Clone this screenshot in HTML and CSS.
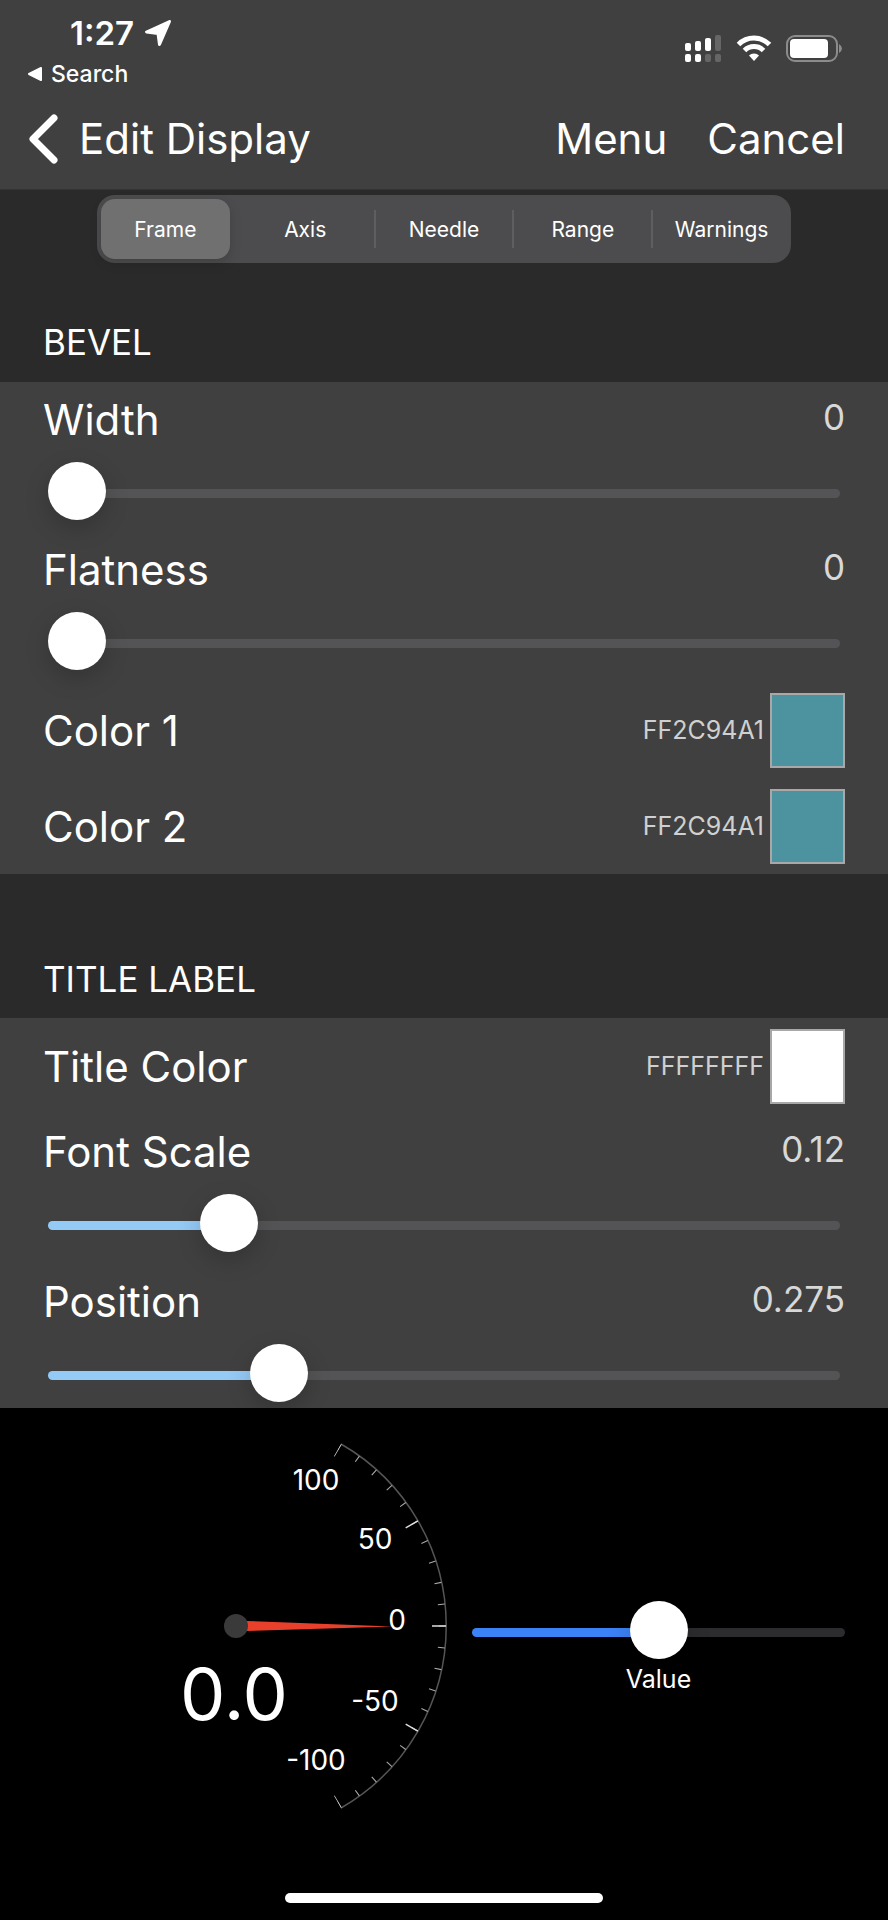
FILE: index.html
```html
<!DOCTYPE html>
<html lang="en">

<head>
  <meta charset="UTF-8">
  <meta name="viewport" content="width=device-width, initial-scale=1">
  <title>Edit Display</title>
  <link rel="stylesheet" href="styles.css">
</head>

<body>
  <header class="top">
    <div class="status">
      <div class="status-left">
        <div class="clock">
          <span>1:27</span>
          <svg width="28" height="28" viewBox="0 0 28 28" fill="#fff" stroke="#fff" stroke-width="3" stroke-linejoin="round">
            <path d="M25.500 2.500 L2.500 13 L14 14.500 L15.500 25.500 Z" />
          </svg>
        </div>
        <a class="back-app" href="#">
          <svg width="16" height="16" viewBox="0 0 16 16" fill="#fff" stroke="#fff" stroke-width="2" stroke-linejoin="round">
            <path d="M14 2 L2 8 L14 14 Z" />
          </svg>
          <span>Search</span>
        </a>
      </div>
      <div class="status-right">
        <svg width="38" height="28" viewBox="0 0 38 28" fill="#fff">
          <rect x="1" y="8" width="6" height="8" rx="2" />
          <rect x="11" y="6" width="6" height="10" rx="2" />
          <rect x="21" y="3" width="6" height="13" rx="2" />
          <rect x="31" y="0" width="6" height="16" rx="2" fill="#666" />
          <rect x="1" y="19" width="6" height="8" rx="2" />
          <rect x="11" y="19" width="6" height="8" rx="2" />
          <rect x="21" y="19" width="6" height="8" rx="2" fill="#666" />
          <rect x="31" y="19" width="6" height="8" rx="2" fill="#666" />
        </svg>
        <svg width="36" height="28" viewBox="0 0 36 28" fill="none" stroke="#fff" stroke-width="5">
          <path d="M2.500 9.500 A22 22 0 0 1 33.500 9.500" />
          <path d="M8.500 15.500 A13.500 13.500 0 0 1 27.500 15.500" />
          <path d="M18 26 L13 20.500 A7 7 0 0 1 23 20.500 Z" fill="#fff" stroke="none" />
        </svg>
        <svg width="57" height="28" viewBox="0 0 57 28">
          <rect x="1" y="1" width="50" height="25" rx="8" fill="none" stroke="#8c8c8c" stroke-width="2" />
          <rect x="4" y="4" width="38" height="19" rx="4" fill="#fff" />
          <path d="M53 9 Q56 11 56 13.500 Q56 16 53 18 Z" fill="#8c8c8c" />
        </svg>
      </div>
    </div>
    <nav class="nav">
      <button class="nav-back" type="button">
        <svg width="32" height="52" viewBox="0 0 32 52" fill="none" stroke="#fff" stroke-width="7" stroke-linecap="round" stroke-linejoin="round">
          <path d="M26 5 L5 26 L26 47" />
        </svg>
        <span>Edit Display</span>
      </button>
      <div class="nav-actions">
        <button type="button">Menu</button>
        <button type="button">Cancel</button>
      </div>
    </nav>
  </header>

  <main>
    <div class="tabs">
      <button class="active" type="button">Frame</button>
      <button type="button">Axis</button>
      <button type="button">Needle</button>
      <button type="button">Range</button>
      <button type="button">Warnings</button>
    </div>

    <h2>BEVEL</h2>
    <section class="group">
      <div class="slider-row">
        <label for="width">Width</label>
        <output for="width">0</output>
        <input type="range" id="width" min="0" max="1" step="any" value="0" style="--fill: 0%">
      </div>
      <div class="slider-row">
        <label for="flatness">Flatness</label>
        <output for="flatness">0</output>
        <input type="range" id="flatness" min="0" max="1" step="any" value="0" style="--fill: 0%">
      </div>
      <div class="color-row">
        <label for="color1">Color 1</label>
        <span class="hex">FF2C94A1</span>
        <button class="swatch teal" id="color1" type="button"></button>
      </div>
      <div class="color-row">
        <label for="color2">Color 2</label>
        <span class="hex">FF2C94A1</span>
        <button class="swatch teal" id="color2" type="button"></button>
      </div>
    </section>

    <h2>TITLE LABEL</h2>
    <section class="group">
      <div class="color-row">
        <label for="title-color">Title Color</label>
        <span class="hex">FFFFFFFF</span>
        <button class="swatch" id="title-color" type="button"></button>
      </div>
      <div class="slider-row">
        <label for="font-scale">Font Scale</label>
        <output for="font-scale">0.12</output>
        <input type="range" id="font-scale" min="0" max="0.58" step="any" value="0.12" style="--fill: 21%">
      </div>
      <div class="slider-row">
        <label for="position">Position</label>
        <output for="position">0.275</output>
        <input type="range" id="position" min="0" max="1" step="any" value="0.275" style="--fill: 28%">
      </div>
    </section>
  </main>

  <footer>
    <div class="preview">
      <svg class="gauge" width="472" height="396" viewBox="0 0 472 396">
        <g fill="none">
          <path d="M341 16 A210 210 0 0 1 341 380" stroke="#555" stroke-width="1.500" />
          <!-- minor ticks every 10, major every 50 -->
          <path d="M339.250 19.200 A206.500 206.500 0 0 1 339.250 376.800" stroke="#aaa" stroke-width="7" pathLength="200" stroke-dasharray="0.5 9.500" stroke-dashoffset="0.250" />
          <path d="M337.500 22.200 A203 203 0 0 1 337.500 373.800" stroke="#ddd" stroke-width="14" pathLength="200" stroke-dasharray="0.700 49.300" stroke-dashoffset="0.350" />
        </g>
        <path d="M246 193 L393 198.500 L246 203 Z" fill="#e8402a" />
        <circle cx="236" cy="198" r="12" fill="#3a3a3a" />
        <g class="scale">
          <text x="316" y="62">100</text>
          <text x="375" y="121">50</text>
          <text x="397" y="202">0</text>
          <text x="375" y="283">-50</text>
          <text x="316" y="342">-100</text>
        </g>
        <text class="reading" x="234" y="292">0.0</text>
      </svg>
      <div class="value">
        <input type="range" id="value" min="-100" max="100" value="0" style="--fill: 50%">
        <label for="value">Value</label>
      </div>
    </div>
    <div class="home-bar"></div>
  </footer>
</body>

</html>
```

FILE: styles.css
```css
* {
  box-sizing: border-box;
}

body {
  display: flex;
  flex-direction: column;
  height: 100vh;
  margin: 0;
  background-color: #2a2a2a;
  color: white;
  font-family: Inter, "Liberation Sans", sans-serif;
  font-size: 42px;
}

button {
  padding: 0;
  border: none;
  background: none;
  color: inherit;
  font: inherit;
  cursor: pointer;
}

svg {
  display: block;
}

/* header */
.top {
  flex: none;
  background-color: #404040;
  border-bottom: 1px solid #333;
}

.status {
  display: flex;
  justify-content: space-between;
  height: 88px;
  padding: 12px 45px 0 27px;
}

.clock {
  display: flex;
  align-items: center;
  gap: 10px;
  padding-left: 43px;
  font-size: 33px;
  font-weight: 600;
  line-height: 42px;
}

.back-app {
  display: flex;
  align-items: center;
  gap: 8px;
  color: white;
  font-size: 23px;
  font-weight: 500;
  line-height: 40px;
  text-decoration: none;
}

.status-right {
  display: flex;
  gap: 14px;
  padding-top: 23px;
}

.nav {
  display: flex;
  align-items: center;
  justify-content: space-between;
  height: 101px;
  padding: 0 43px 0 28px;
}

.nav-back {
  display: flex;
  align-items: center;
  gap: 19px;
}

.nav-actions {
  display: flex;
  gap: 40px;
}

/* settings list */
main {
  flex: 1;
  min-height: 0;
  overflow-y: auto;
  scrollbar-width: none;
}

.tabs {
  display: grid;
  grid-template-columns: repeat(5, 1fr);
  height: 68px;
  margin: 5px 97px 0;
  border-radius: 18px;
  background-color: #4c4c4e;
  font-size: 21px;
}

.tabs button {
  position: relative;
}

.tabs .active {
  margin: 4px 6px 4px 4px;
  border-radius: 14px;
  background-color: #707070;
  box-shadow: 0 4px 12px rgba(0, 0, 0, 0.15);
}

.tabs button:nth-child(n+3)::before {
  content: "";
  position: absolute;
  top: 15px;
  left: -1px;
  width: 2px;
  height: 38px;
  background-color: #5e5e60;
}

h2 {
  height: 144px;
  margin: 0;
  padding: 81px 43px 0;
  font-size: 35px;
  font-weight: 400;
  line-height: 48px;
}

.tabs + h2 {
  height: 119px;
  padding-top: 55px;
}

.group {
  background-color: #404040;
}

.slider-row {
  display: grid;
  grid-template-columns: 1fr auto;
  grid-template-rows: 82px 58px;
  height: 150px;
  padding: 0 43px;
}

.slider-row label {
  padding-top: 10px;
  line-height: 56px;
}

.slider-row output {
  padding-top: 10px;
  color: #d8d8d8;
  font-size: 35px;
  line-height: 50px;
}

.slider-row input {
  grid-column: 1 / 3;
  margin: 0 5px;
}

.color-row {
  display: flex;
  align-items: center;
  height: 96px;
  padding: 0 43px;
}

.color-row label {
  flex: 1;
}

.hex {
  margin-right: 6px;
  color: #d0d0d0;
  font-size: 25px;
}

.swatch {
  width: 75px;
  height: 75px;
  border: 2px solid #a8a8a8;
  background-color: white;
}

.teal {
  background-color: #4d929f;
}

/* sliders */
input[type="range"] {
  --on: #94caf6;
  --off: #545456;
  appearance: none;
  -webkit-appearance: none;
  height: 58px;
  background: none;
}

input[type="range"]::-webkit-slider-runnable-track {
  height: 9px;
  border-radius: 5px;
  background: linear-gradient(to right, var(--on) var(--fill), var(--off) var(--fill));
}

input[type="range"]::-webkit-slider-thumb {
  -webkit-appearance: none;
  width: 58px;
  height: 58px;
  margin-top: -27px;
  border-radius: 50%;
  background-color: white;
  box-shadow: 0 8px 24px rgba(0, 0, 0, 0.2);
}

/* gauge preview */
footer {
  display: flex;
  flex: none;
  flex-direction: column;
  height: 512px;
  padding: 20px 0 17px;
  background-color: black;
}

.preview {
  display: flex;
  padding-right: 43px;
}

.gauge {
  flex: none;
}

.scale {
  fill: white;
  font-size: 28px;
  text-anchor: middle;
}

.reading {
  fill: white;
  font-size: 72px;
  text-anchor: middle;
}

.value {
  display: flex;
  flex: 1;
  flex-direction: column;
  padding-top: 175px;
  font-size: 25px;
  line-height: 36px;
  text-align: center;
}

.value input {
  --on: #3b82f6;
  --off: #2c2c2e;
  margin: 0;
}

.home-bar {
  width: 318px;
  height: 10px;
  margin: auto auto 0;
  border-radius: 5px;
  background-color: white;
}
```
